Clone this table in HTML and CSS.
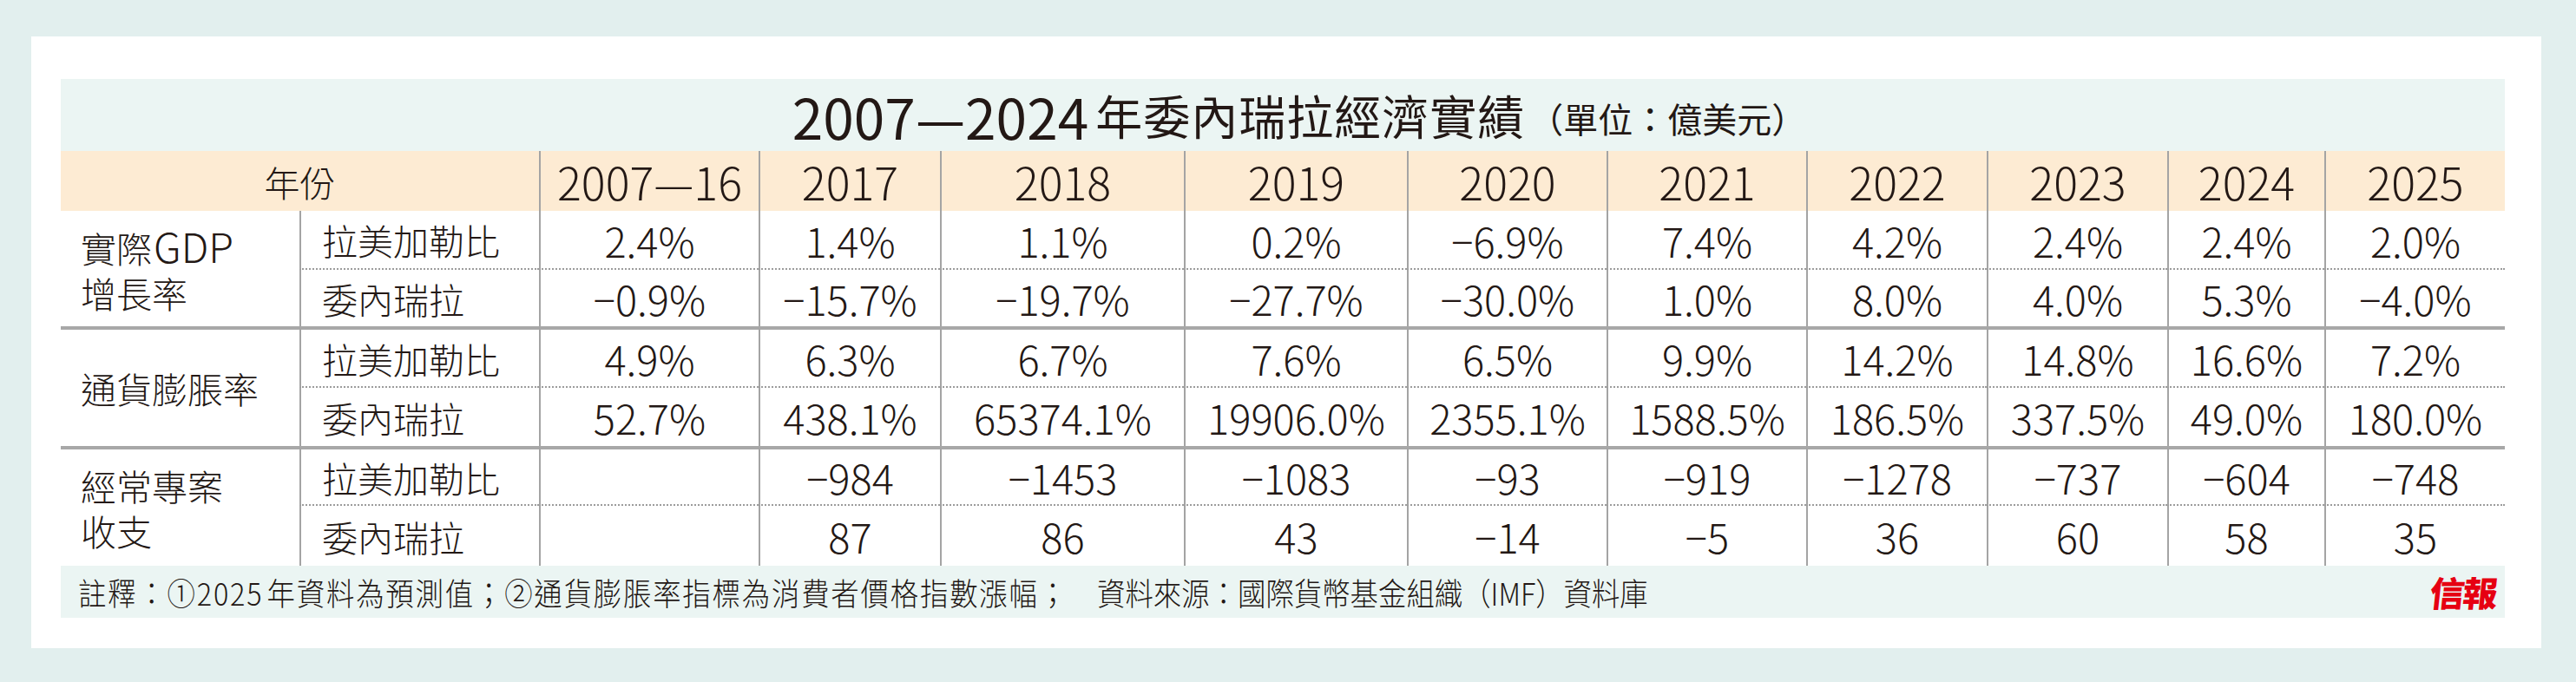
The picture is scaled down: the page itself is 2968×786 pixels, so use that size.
FILE: index.html
```html
<!DOCTYPE html>
<html lang="zh-Hant">
<head>
<meta charset="utf-8">
<title>2007—2024年委內瑞拉經濟實績</title>
<link rel="stylesheet" href="styles.css">
</head>
<body>
<div class="panel">
  <div class="chart">
    <div class="title"><span class="tnum">2007—2024</span><span class="tcjk">年委內瑞拉經濟實績</span><span class="unit">（單位：億美元）</span></div>
    <div class="grid">
      <div class="hd first">年份</div>
      <div class="hd">2007—16</div>
      <div class="hd">2017</div>
      <div class="hd">2018</div>
      <div class="hd">2019</div>
      <div class="hd">2020</div>
      <div class="hd">2021</div>
      <div class="hd">2022</div>
      <div class="hd">2023</div>
      <div class="hd">2024</div>
      <div class="hd">2025</div>

      <div class="glabel"><p class="gl">實際<span class="lat">GDP</span><br>增長率</p></div>
      <div class="sub r1">拉美加勒比</div>
      <div class="val r1">2.4%</div><div class="val r1">1.4%</div><div class="val r1">1.1%</div><div class="val r1">0.2%</div><div class="val r1">−6.9%</div><div class="val r1">7.4%</div><div class="val r1">4.2%</div><div class="val r1">2.4%</div><div class="val r1">2.4%</div><div class="val r1">2.0%</div>
      <div class="sub">委內瑞拉</div>
      <div class="val">−0.9%</div><div class="val">−15.7%</div><div class="val">−19.7%</div><div class="val">−27.7%</div><div class="val">−30.0%</div><div class="val">1.0%</div><div class="val">8.0%</div><div class="val">4.0%</div><div class="val">5.3%</div><div class="val">−4.0%</div>

      <div class="glabel gt"><p class="gl">通貨膨脹率</p></div>
      <div class="sub r1 gt">拉美加勒比</div>
      <div class="val r1 gt">4.9%</div><div class="val r1 gt">6.3%</div><div class="val r1 gt">6.7%</div><div class="val r1 gt">7.6%</div><div class="val r1 gt">6.5%</div><div class="val r1 gt">9.9%</div><div class="val r1 gt">14.2%</div><div class="val r1 gt">14.8%</div><div class="val r1 gt">16.6%</div><div class="val r1 gt">7.2%</div>
      <div class="sub">委內瑞拉</div>
      <div class="val">52.7%</div><div class="val">438.1%</div><div class="val">65374.1%</div><div class="val">19906.0%</div><div class="val">2355.1%</div><div class="val">1588.5%</div><div class="val">186.5%</div><div class="val">337.5%</div><div class="val">49.0%</div><div class="val">180.0%</div>

      <div class="glabel gt"><p class="gl">經常專案<br>收支</p></div>
      <div class="sub r1 gt">拉美加勒比</div>
      <div class="val r1 gt"></div><div class="val r1 gt">−984</div><div class="val r1 gt">−1453</div><div class="val r1 gt">−1083</div><div class="val r1 gt">−93</div><div class="val r1 gt">−919</div><div class="val r1 gt">−1278</div><div class="val r1 gt">−737</div><div class="val r1 gt">−604</div><div class="val r1 gt">−748</div>
      <div class="sub">委內瑞拉</div>
      <div class="val"></div><div class="val">87</div><div class="val">86</div><div class="val">43</div><div class="val">−14</div><div class="val">−5</div><div class="val">36</div><div class="val">60</div><div class="val">58</div><div class="val">35</div>
    </div>
    <div class="foot">
      <div class="note"><span class="ft">註釋：①2025<span class="thin"> </span>年資料為預測值；②通貨膨脹率指標為消費者價格指數漲幅；</span></div>
      <div class="source"><span class="ft src">資料來源：國際貨幣基金組織（IMF）資料庫</span></div>
      <div class="logo">信報</div>
    </div>
  </div>
</div>
</body>
</html>
```

FILE: styles.css
```css
html, body {
  margin: 0;
  padding: 0;
}
body {
  background: #e2efee;
  width: 2968px;
  height: 786px;
  font-family: "Noto Sans CJK TC Light", "Noto Sans CJK TC DemiLight", "Noto Sans CJK TC", "Noto Sans", sans-serif;
  color: #231815;
}
.panel {
  margin: 42px 0 0 36px;
  width: 2892px;
  height: 705px;
  box-sizing: border-box;
  padding: 49px 0 0 34px;
  background: #ffffff;
}
.chart {
  width: 2816px;
}
.title {
  height: 83px;
  background: #ebf5f3;
  display: flex;
  align-items: center;
  justify-content: center;
  font-family: "Noto Sans CJK TC", "Noto Sans", sans-serif;
  font-weight: 400;
  line-height: 1;
}
.tnum {
  font-size: 64px;
  margin-right: 8px;
}
.tcjk {
  font-size: 54px;
  letter-spacing: 1px;
}
.unit {
  font-size: 40px;
  margin-top: 6px;
  margin-left: 4px;
  margin-right: -38px;
}
.grid {
  display: grid;
  grid-template-columns: 275px 276px 253px 209px 281px 257px 230px 230px 208px 208px 181px 208px;
  grid-template-rows: 69px 68px 65px 71px 67px 69px 69px;
  font-weight: 300;
}
.grid > div {
  box-sizing: border-box;
  display: flex;
  align-items: center;
  justify-content: center;
  border-left: 2px solid #a4a4a4;
  white-space: nowrap;
}
.hd {
  background: #fdebd3;
  font-size: 52px;
}
.grid > .first {
  grid-column: span 2;
  border-left: none;
  font-size: 41px;
}
.grid > .glabel {
  grid-row: span 2;
  border-left: none;
  justify-content: flex-start;
  padding-left: 23px;
  font-size: 41px;
}
.gl {
  margin: 0;
  line-height: 52px;
}
.lat {
  font-size: 47px;
  margin-left: 2px;
}
.grid > .sub {
  justify-content: flex-start;
  padding-left: 24px;
  font-size: 41px;
}
.val {
  font-size: 47px;
}
.grid > .r1 {
  border-bottom: 2px dotted #9c9c9c;
}
.grid > .gt {
  border-top: 4px solid #a8a8a8;
}
.foot {
  height: 60px;
  background: #ebf5f3;
  display: flex;
  align-items: center;
  padding-left: 20px;
  font-size: 36px;
  font-weight: 300;
  white-space: nowrap;
}
.ft {
  display: inline-block;
  transform: scaleX(0.9);
  transform-origin: left center;
  letter-spacing: 2px;
}
.ft.src {
  letter-spacing: 0;
}
.note {
  width: 1174px;
  flex: none;
}
.source {
  flex: 1;
}
.logo {
  color: #e60012;
  font-family: "Noto Sans CJK TC", sans-serif;
  font-weight: 900;
  font-size: 40px;
  margin-right: 10px;
  letter-spacing: -2px;
  transform: skewX(-6deg);
}
.thin {
  font-size: 12px;
}
```
